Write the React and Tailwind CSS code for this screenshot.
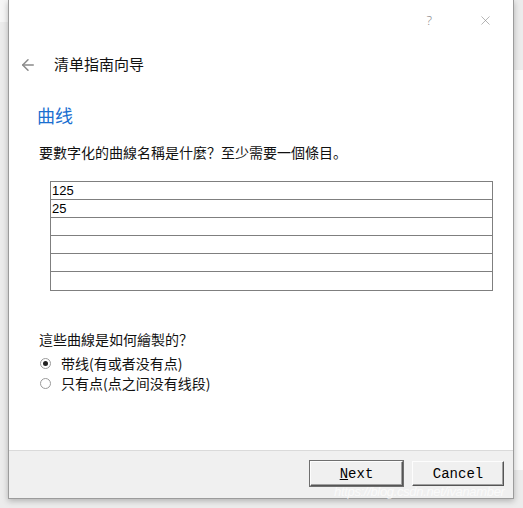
import { ArrowLeft, X } from 'lucide-react';

const rows = ['125', '25', '', '', '', ''];

const cjk = { fontFamily: '"Noto Sans CJK SC", "Noto Sans", sans-serif' };

const Radio = ({ checked }) => (
  <span className="w-[11px] h-[11px] rounded-full border border-[#9a9a9a] bg-white flex items-center justify-center shrink-0">
    {checked && <span className="w-[5px] h-[5px] rounded-full bg-[#222]" />}
  </span>
);

export default function App() {
  return (
    <div className="relative w-[523px] h-[508px] overflow-hidden bg-[#ececec]">
      {/* backdrop strips */}
      <div className="absolute left-0 top-0 w-[8px] h-[22px] bg-[#f6f6f6]" />
      <div className="absolute right-0 top-[70px] w-[9px] h-[400px] bg-[#fafafa]" />

      {/* ── DIALOG ── */}
      <div className="relative ml-[8px] w-[506px] h-[499px] bg-white border-x border-b border-[#9c9c9c] shadow-[0_2px_6px_rgba(0,0,0,0.25)] flex flex-col" style={cjk}>

        {/* Title bar */}
        <div className="h-[40px] flex items-center justify-end pr-[20px] gap-[46px] text-[#8a8a8a]">
          <span className="text-[13px] font-light leading-none" style={{ fontFamily: '"Noto Sans", sans-serif' }}>?</span>
          <X className="w-[15px] h-[15px]" strokeWidth={1} />
        </div>

        {/* Header */}
        <div className="h-[52px] flex items-center pl-[10px] pb-[3px]">
          <ArrowLeft className="w-[18px] h-[18px] text-[#8a8a8a]" strokeWidth={2} />
          <span className="ml-[17px] text-[15px] text-[#111]">清单指南向导</span>
        </div>

        {/* Body */}
        <div className="flex-1 pl-[28px] pr-[22px]">
          <div className="mt-[11px] text-[18px] leading-[24px] text-[#1a6fd0]">曲线</div>
          <div className="mt-[16px] text-[14px] leading-[18px] text-[#111] pl-[2px]">要數字化的曲線名稱是什麼？至少需要一個條目。</div>

          <div className="mt-[20px] ml-[13px] w-[443px] border border-[#7f7f7f]">
            {rows.map((r, i) => (
              <div
                key={i}
                className={`h-[18px] px-[1px] text-[13px] leading-[17px] text-black ${i < rows.length - 1 ? 'border-b border-[#7f7f7f]' : 'h-[17px]'}`}
                style={{ fontFamily: '"Liberation Sans", Arial, sans-serif' }}
              >
                {r}
              </div>
            ))}
          </div>

          <div className="mt-[39px] text-[14px] leading-[18px] text-[#111] pl-[2px]">這些曲線是如何繪製的？</div>
          <div className="mt-[6px] flex flex-col gap-[2px] pl-[3px]">
            <label className="flex items-center h-[18px] text-[14px] text-[#111]">
              <Radio checked />
              <span className="ml-[10px]">带线(有或者没有点)</span>
            </label>
            <label className="flex items-center h-[18px] text-[14px] text-[#111]">
              <Radio />
              <span className="ml-[10px]">只有点(点之间没有线段)</span>
            </label>
          </div>
        </div>

        {/* Footer */}
        <div className="h-[48px] bg-[#f0f0f0] border-t border-[#dadada] flex items-start justify-end gap-[9px] pt-[10px] pr-[9px]" style={{ fontFamily: '"Liberation Mono", "Courier New", monospace' }}>
          <button className="w-[93px] h-[25px] leading-[20px] bg-[#f0f0f0] border border-t-[#fdfdfd] border-l-[#fdfdfd] border-r-[#555] border-b-[#555] shadow-[inset_-1px_-1px_0_#a0a0a0,0_0_0_1px_#6f6f6f] text-[14px] text-black">
            <span className="underline">N</span>ext
          </button>
          <button className="w-[92px] h-[25px] leading-[20px] bg-[#f0f0f0] border border-t-[#fdfdfd] border-l-[#fdfdfd] border-r-[#555] border-b-[#555] shadow-[inset_-1px_-1px_0_#a0a0a0] text-[14px] text-black">
            Cancel
          </button>
        </div>
      </div>

      {/* watermark */}
      <div className="absolute left-[334px] top-[485px] text-[13px] leading-[14px] text-white/70 italic tracking-tight" style={{ fontFamily: '"Liberation Sans", Arial, sans-serif' }}>
        https://blog.csdn.net/ivanamber
      </div>
    </div>
  );
}
